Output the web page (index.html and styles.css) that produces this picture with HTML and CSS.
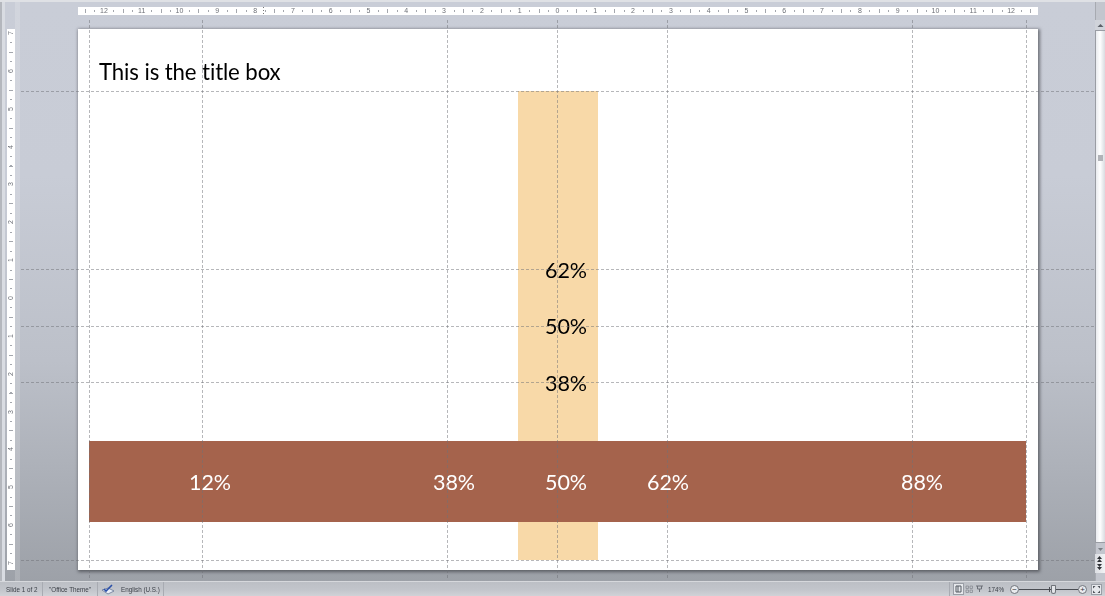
FILE: index.html
```html
<!DOCTYPE html>
<html lang="en">
<head>
<meta charset="utf-8">
<title>Slide guides</title>
<link rel="stylesheet" href="styles.css">
</head>
<body>
<div class="app">
  <main class="workspace">
    <div class="ruler-top">
      <span class="rt">12</span><span class="rt">11</span><span class="rt">10</span><span class="rt">9</span><span class="rt">8</span><span class="rt">7</span><span class="rt">6</span><span class="rt">5</span><span class="rt">4</span><span class="rt">3</span><span class="rt">2</span><span class="rt">1</span><span class="rt">0</span><span class="rt">1</span><span class="rt">2</span><span class="rt">3</span><span class="rt">4</span><span class="rt">5</span><span class="rt">6</span><span class="rt">7</span><span class="rt">8</span><span class="rt">9</span><span class="rt">10</span><span class="rt">11</span><span class="rt">12</span>
      <i class="cursor-mark"></i>
    </div>
    <div class="ruler-left">
      <span class="rl">7</span><span class="rl">6</span><span class="rl">5</span><span class="rl">4</span><span class="rl">3</span><span class="rl">2</span><span class="rl">1</span><span class="rl">0</span><span class="rl">1</span><span class="rl">2</span><span class="rl">3</span><span class="rl">4</span><span class="rl">5</span><span class="rl">6</span><span class="rl">7</span>
    </div>
    <section class="slide">
      <div class="title">This is the title box</div>
      <div class="band-v"></div>
      <div class="band-h"></div>
      <span class="pct dark p-v62">62%</span>
      <span class="pct dark p-v50">50%</span>
      <span class="pct dark p-v38">38%</span>
      <span class="pct light p-h12">12%</span>
      <span class="pct light p-h38">38%</span>
      <span class="pct light p-h50">50%</span>
      <span class="pct light p-h62">62%</span>
      <span class="pct light p-h88">88%</span>
    </section>
    <div class="scrollbar">
      <div class="sb-btn"><svg width="9" height="9" viewBox="0 0 9 9"><path d="M1.500 6h6L4.500 3z" fill="#5c6068"/></svg></div>
      <div class="sb-thumb"><i class="sb-grip"></i></div>
      <div class="sb-btn short"><svg width="9" height="7" viewBox="0 0 9 7"><path d="M2 2h5L4.500 5z" fill="#7b7f86"/></svg></div>
      <div class="sb-nav">
        <svg width="9" height="18" viewBox="0 0 9 18"><path d="M2 5h5L4.500 2zM2 8h5L4.500 5zM2 10h5l-2.500 3zM2 13h5l-2.500 3z" fill="#2e3136"/></svg>
      </div>
    </div>
    <div class="guides">
      <i class="gh g-y91"></i><i class="gh g-y269"></i><i class="gh g-y326"></i><i class="gh g-y382"></i><i class="gh g-y560"></i>
      <i class="gv g-x89"></i><i class="gv g-x202"></i><i class="gv g-x447"></i><i class="gv g-x557"></i><i class="gv g-x667"></i><i class="gv g-x912"></i><i class="gv g-x1026"></i>
    </div>
  </main>
  <footer class="status">
    <span class="cell c-slide">Slide 1 of 2</span>
    <span class="cell c-theme">"Office Theme"</span>
    <span class="cell c-spell">
      <svg width="14" height="11" viewBox="0 0 14 11"><path d="M1 6l6 4 6-3-6-3z" fill="#e8edf6" stroke="#5a6a8c" stroke-width=".7"/><path d="M3 5l2 2 6-6" fill="none" stroke="#2a4fa8" stroke-width="1.600"/></svg>
    </span>
    <span class="cell c-lang">English (U.S.)</span>
    <span class="status-fill"></span>
    <span class="views">
      <svg width="31" height="12" viewBox="0 0 31 12">
        <rect x=".5" y=".5" width="10" height="11" fill="#e6e8ec" stroke="#9a9ea6"/>
        <path d="M3 3h5v6H3zM5 3v6" fill="none" stroke="#555a62"/>
        <path d="M13 3h2.500v2.500H13zM17 3h2.500v2.500H17zM13 7h2.500v2.500H13zM17 7h2.500v2.500H17z" fill="none" stroke="#8a8e96" stroke-width=".8"/>
        <path d="M23 3h7M24.500 3v3h4V3M26.500 6v3" fill="none" stroke="#6c7078"/>
      </svg>
    </span>
    <span class="zoom-pct">174%</span>
    <span class="zoom">
      <i class="z-btn">&#8722;</i>
      <i class="z-track"><i class="z-tick"></i><i class="z-knob"></i></i>
      <i class="z-btn">+</i>
    </span>
    <svg class="fit" width="11" height="11" viewBox="0 0 11 11"><rect x=".5" y=".5" width="10" height="10" fill="#e6e8ec" stroke="#9a9ea6"/><path d="M2 2l2.500 0-2.500 2.500zM9 2v2.500L6.500 2zM2 9v-2.500L4.500 9zM9 9H6.500L9 6.500z" fill="#4f535a"/></svg>
  </footer>
</div>
</body>
</html>
```
FILE: styles.css
```css
* { box-sizing: border-box; }
html, body { margin: 0; padding: 0; }
body { width: 1105px; height: 596px; overflow: hidden; font-family: "Liberation Sans", Arial, sans-serif; }
i { display: block; font-style: normal; }

.app { display: flex; flex-direction: column; width: 1105px; height: 596px; }

.workspace {
  position: relative;
  flex: 1;
  display: grid;
  grid-template-columns: 7px 8px 63px 960px 57px 10px;
  grid-template-rows: 5px 8px 14px 541px 1fr;
  border-top: 2px solid #dfe1e5;
  background: linear-gradient(#c9cdd7 0, #c8ccd6 30%, #bcc0c9 62%, #9da1a8 100%);
}

.workspace::before {
  content: "";
  position: absolute;
  left: 0; top: 0; bottom: 0;
  width: 21px;
  background: linear-gradient(90deg, #b4b7bd 0 2px, #d9dce2 2px 5px, transparent 5px 15px, rgba(255, 255, 255, .16) 15px 20px, transparent 20px);
}

.ruler-top {
  grid-column: 4;
  grid-row: 2;
  position: relative;
  display: flex;
  padding-left: 7px;
  background-color: #fff;
  background-image:
    repeating-linear-gradient(90deg, #a4a7ad 0 1px, transparent 1px 9.45px),
    repeating-linear-gradient(90deg, #a4a7ad 0 1px, transparent 1px 37.8px);
  background-size: 100% 2px, 100% 4px;
  background-repeat: no-repeat;
  background-position: 7px 3px, 7px 2px;
}
.rt {
  flex: 0 0 37.8px;
  text-align: center;
  font-size: 7px;
  line-height: 8px;
  color: #6d7077;
  filter: blur(.25px);
  background: linear-gradient(#fff, #fff) center / 9px 8px no-repeat;
}
.cursor-mark {
  position: absolute;
  left: 185px;
  top: 0;
  width: 1px;
  height: 8px;
  background: repeating-linear-gradient(#777 0 1px, transparent 1px 3px);
}

.ruler-left {
  grid-column: 2;
  grid-row: 4;
  display: flex;
  flex-direction: column;
  gap: 28.86px;
  background-color: #fff;
  background-image:
    repeating-linear-gradient(#a4a7ad 0 1px, transparent 1px 9.46px),
    repeating-linear-gradient(#a4a7ad 0 1px, transparent 1px 37.85px);
  background-size: 2px 100%, 4px 100%;
  background-repeat: no-repeat;
  background-position: 3px 4px, 2px 23px;
}
.rl {
  flex: 0 0 9px;
  display: flex;
  align-items: center;
  justify-content: center;
  writing-mode: vertical-rl;
  transform: rotate(180deg);
  font-size: 7px;
  line-height: 8px;
  color: #6d7077;
  filter: blur(.25px);
  background: #fff;
}

.slide {
  grid-column: 4;
  grid-row: 4;
  position: relative;
  background: #fff;
  box-shadow: 1px 1px 3px 1px rgba(40, 42, 48, .55);
  color: #000;
  font-family: Lato, "Liberation Sans", sans-serif;
}
.title {
  position: absolute;
  left: 21px;
  top: 29px;
  font-size: 22.200px;
  line-height: 28px;
  white-space: nowrap;
  letter-spacing: -.1px;
  filter: blur(.3px);
}
.band-v { position: absolute; left: 440px; top: 62px; width: 80px; height: 469px; background: #f8d9a8; }
.band-h { position: absolute; left: 11px; top: 412px; width: 937px; height: 81px; background: #a5634c; }

.pct { position: absolute; width: 50px; text-align: center; font-size: 21.500px; line-height: 26px; filter: blur(.3px); }
.dark { color: #000; }
.light { color: #fff; }
.p-v62 { left: 463px; top: 228px; }
.p-v50 { left: 463px; top: 284px; }
.p-v38 { left: 463px; top: 341px; }
.p-h12 { left: 107px; top: 440px; }
.p-h38 { left: 351px; top: 440px; }
.p-h50 { left: 463px; top: 440px; }
.p-h62 { left: 565px; top: 440px; }
.p-h88 { left: 819px; top: 440px; }

.scrollbar {
  grid-column: 6;
  grid-row: 1 / -1;
  display: flex;
  flex-direction: column;
  padding-top: 18px;
  background: linear-gradient(90deg, #a7aab1 0 1px, #c3c6ce 1px);
  position: relative;
}
.sb-btn { height: 10px; display: flex; align-items: center; justify-content: center; background: #d0d3da; }
.sb-btn.short { height: 8px; margin-top: 2px; background: transparent; }
.sb-thumb {
  height: 513px;
  position: relative;
  border: 1px solid #9a9da4;
  border-width: 1px 0 1px 1px;
  background: linear-gradient(90deg, #e9ebef, #fff 45%, #d9dbe0);
}
.sb-grip { position: absolute; left: 2px; top: 124px; width: 5px; height: 6px; background: #b1b3b8; }
.sb-nav { height: 19px; margin-top: 1px; background: linear-gradient(90deg, #dcdee3, #f2f3f5); }
.sb-nav svg { display: block; }

.guides { position: absolute; inset: -2px 0 0 0; pointer-events: none; }
.gh {
  position: absolute;
  left: 21px;
  width: 1074px;
  height: 1px;
  background: repeating-linear-gradient(90deg, rgba(110, 112, 118, .5) 0 3px, transparent 3px 5px);
}
.gv {
  position: absolute;
  top: 20px;
  height: 560px;
  width: 1px;
  background: repeating-linear-gradient(rgba(110, 112, 118, .5) 0 3px, transparent 3px 5px);
}
.g-y91 { top: 91px; }
.g-y269 { top: 269px; }
.g-y326 { top: 326px; }
.g-y382 { top: 382px; }
.g-y560 { top: 560px; }
.g-x89 { left: 89px; }
.g-x202 { left: 202px; }
.g-x447 { left: 447px; }
.g-x557 { left: 557px; }
.g-x667 { left: 667px; }
.g-x912 { left: 912px; }
.g-x1026 { left: 1026px; }

.status {
  flex: 0 0 15px;
  display: flex;
  align-items: center;
  font-size: 6.300px;
  color: #3c4048;
  background: linear-gradient(#bcbfc5, #c2c5cb 55%, #d0d2d7);
  border-top: 1px solid #d6d8dc;
}
.status .cell, .zoom-pct { filter: blur(.2px); }
.cell {
  height: 14px;
  display: flex;
  align-items: center;
  white-space: nowrap;
  border-right: 1px solid #a8abb2;
}
.c-slide { width: 43px; padding-left: 6px; }
.c-theme { width: 55px; padding-left: 6px; }
.c-spell { width: 22px; padding-left: 3px; border-right: 0; }
.c-lang { width: 44px; padding-left: 1px; }
.status-fill { flex: 1; height: 14px; border-right: 1px solid #a8abb2; }
.views { width: 31px; margin-left: 3px; height: 12px; }
.views svg { display: block; }
.zoom-pct { width: 26px; padding-left: 4px; }
.zoom { display: flex; align-items: center; width: 77px; }
.z-btn {
  flex: 0 0 9px;
  height: 9px;
  border: 1px solid #71757c;
  border-radius: 50%;
  background: #e9ebee;
  font-size: 8px;
  line-height: 7px;
  text-align: center;
  color: #33363c;
}
.z-track { position: relative; flex: 1; height: 1px; background: #4a4d53; }
.z-tick { position: absolute; left: 30px; top: -2px; width: 1px; height: 5px; background: #4a4d53; }
.z-knob { position: absolute; left: 32px; top: -4px; width: 5px; height: 9px; border: 1px solid #6f7379; background: #e3e5e9; border-radius: 1px 1px 3px 3px; }
.fit { margin: 0 3px 0 4px; flex: 0 0 11px; }
```
